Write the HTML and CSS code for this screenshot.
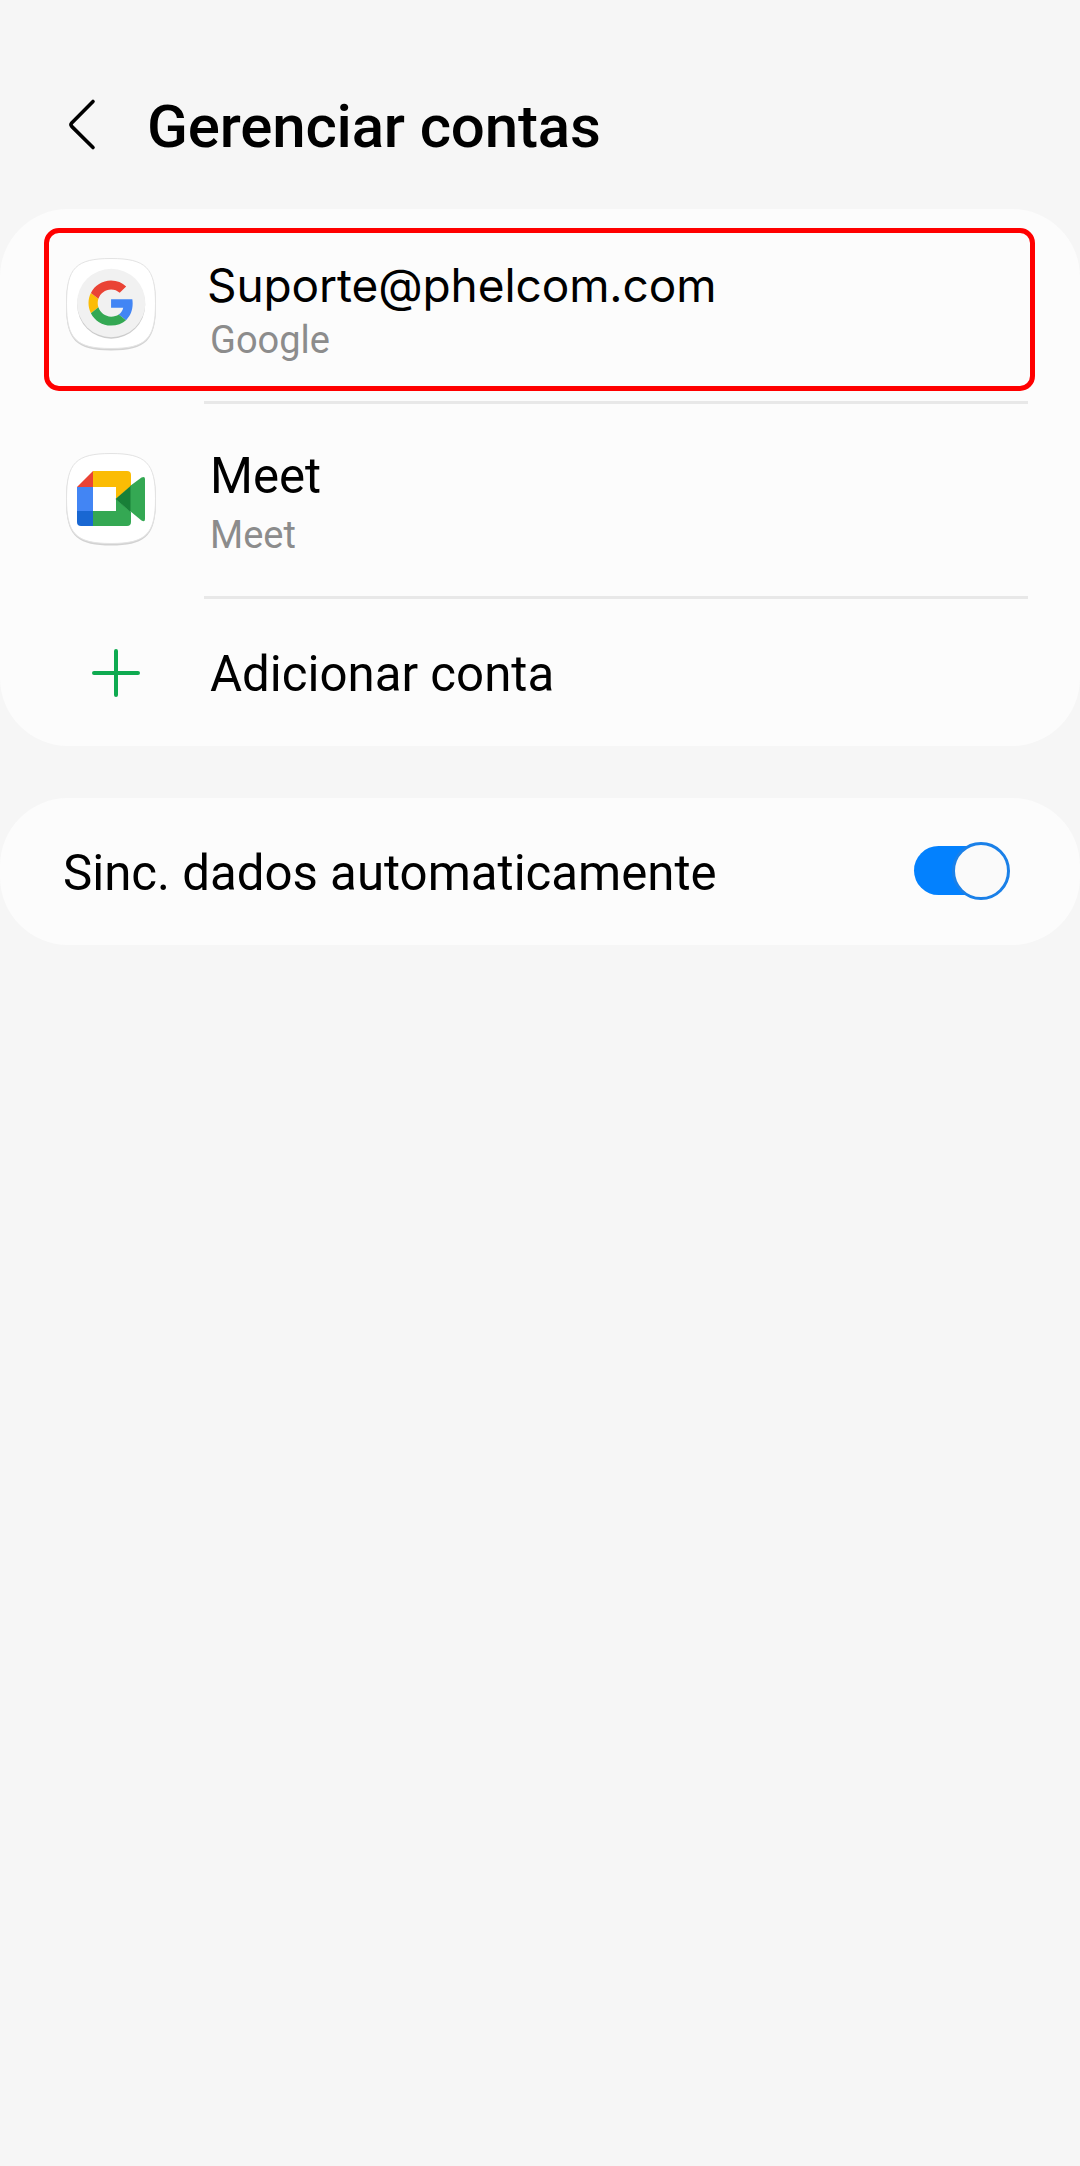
FILE: index.html
```html
<!DOCTYPE html>
<html lang="pt-BR">
<head>
<meta charset="utf-8">
<title>Gerenciar contas</title>
<link rel="stylesheet" href="styles.css">
</head>
<body>
<header class="header">
  <svg class="back" width="30" height="56" viewBox="0 0 30 56" fill="none" stroke="#000" stroke-width="3.6" stroke-linecap="round" stroke-linejoin="round"><path d="M26 5.500 4.700 27q-1.500 1.700 0 3.400L26 51.500"/></svg>
  <h1 class="title">Gerenciar contas</h1>
</header>
<main class="content">
  <section class="card accounts">
    <div class="row account selected">
      <svg class="app-icon" width="94" height="96" viewBox="0 0 94 96">
        <path d="M47 4C82 4 92 14 92 49S82 94.500 47 94.500 2 84 2 49 12 4 47 4Z" fill="#d2d2d2"/>
        <path d="M47 2.500C82 2.500 91.500 12 91.500 47.500S82 92.500 47 92.500 2.500 83 2.500 47.500 12 2.500 47 2.500Z" fill="#fff" stroke="#e3e3e3" stroke-width="1"/>
        <circle cx="47.200" cy="48.700" r="34" fill="#ccc"/>
        <circle cx="47.200" cy="47" r="34.200" fill="#f1f1f1"/>
        <g transform="translate(24.500 24.500) scale(.94)">
          <path fill="#4285f4" d="M46.980 24.550c0-1.570-.15-3.090-.38-4.550H24v9.020h12.940c-.58 2.960-2.260 5.480-4.780 7.180l7.730 6c4.510-4.180 7.090-10.360 7.090-17.650z"/>
          <path fill="#fbbc05" d="M10.530 28.590c-.48-1.450-.76-2.990-.76-4.590s.27-3.140.76-4.590l-7.980-6.190C.92 16.460 0 20.120 0 24s.92 7.540 2.560 10.780z"/>
          <path fill="#34a853" d="M24 48c6.480 0 11.930-2.130 15.890-5.810l-7.730-6c-2.150 1.450-4.920 2.300-8.160 2.300-6.260 0-11.570-4.220-13.470-9.910l-7.980 6.190C6.510 42.620 14.620 48 24 48z"/>
          <path fill="#ea4335" d="M24 9.500c3.540 0 6.710 1.220 9.210 3.600l6.850-6.850C35.900 2.380 30.470 0 24 0 14.620 0 6.510 5.380 2.560 13.220l7.980 6.190C12.430 13.720 17.740 9.500 24 9.500z"/>
        </g>
      </svg>
      <div class="labels email-labels">
        <div class="name email">Suporte@phelcom.com</div>
        <div class="type google">Google</div>
      </div>
    </div>
    <div class="divider"></div>
    <div class="row account">
      <svg class="app-icon" width="94" height="96" viewBox="0 0 94 96">
        <path d="M47 4C82 4 92 14 92 49S82 94.500 47 94.500 2 84 2 49 12 4 47 4Z" fill="#d2d2d2"/>
        <path d="M47 2.500C82 2.500 91.500 12 91.500 47.500S82 92.500 47 92.500 2.500 83 2.500 47.500 12 2.500 47 2.500Z" fill="#fff" stroke="#e3e3e3" stroke-width="1"/>
        <path fill="#ea4335" d="M29 20v16H13z"/>
        <path fill="#4285f4" d="M13 36h16v24H13z"/>
        <path fill="#1967d2" d="M13 60h16v15H17q-4 0-4-4z"/>
        <path fill="#fbbc04" d="M29 20h34q4 0 4 4v11L52 48V36H29z"/>
        <path fill="#34a853" d="M29 60h23V48l15 13v10q0 4-4 4H29z"/>
        <path fill="#34a853" d="M66 35 77.500 26.500Q81 25 81 28v40q0 3.500-3.500 1.500L66 60z"/>
        <path fill="#188038" d="m51.500 48 15-13v26z"/>
      </svg>
      <div class="labels">
        <div class="name">Meet</div>
        <div class="type meet-type">Meet</div>
      </div>
    </div>
    <div class="divider"></div>
    <div class="row add">
      <svg class="plus" width="52" height="52" viewBox="0 0 52 52" stroke="#0eaa50" stroke-width="4" stroke-linecap="round"><path d="M26 4v44M4 26h44"/></svg>
      <div class="name add-name">Adicionar conta</div>
    </div>
  </section>
  <section class="card sync">
    <div class="name sync-name">Sinc. dados automaticamente</div>
    <div class="switch"><div class="thumb"></div></div>
  </section>
</main>
</body>
</html>
```
FILE: styles.css
```css
* { box-sizing: border-box; }
body {
  margin: 0;
  min-height: 2166px;
  background: #f6f6f6;
  color: #000;
  font-family: Roboto, sans-serif;
}
.header {
  display: flex;
  align-items: flex-start;
  height: 209px;
  padding: 96px 0 0 67px;
}
.back { flex: none; }
.title {
  margin: -4px 0 0 50px;
  font-size: 60px;
  line-height: 70px;
  font-weight: 500;
  letter-spacing: -.16px;
  white-space: nowrap;
}
.content { display: flex; flex-direction: column; gap: 52px; }
.card { background: #fcfcfc; border-radius: 68px; }
.accounts { height: 537px; padding-top: 19px; }
.row { display: flex; }
.account { height: 192px; margin-left: 44px; padding: 47px 0 0 19.500px; }
.selected {
  width: 991px;
  height: 163px;
  margin-bottom: 10px;
  padding: 23px 0 0 14.500px;
  border: 5px solid #f00;
  border-radius: 15px;
}
.app-icon { flex: none; }
.labels { margin: -4px 0 0 52.500px; }
.email-labels { margin-top: 0; }
.name { font-size: 49.200px; line-height: 58px; white-space: nowrap; }
.email {
  margin-left: -3px;
  font-family: Inter, sans-serif;
  font-size: 46px;
  font-weight: 370;
  letter-spacing: -.1px;
}
.type { font-size: 38px; line-height: 44px; color: #8c8c8c; }
.google { margin-top: 4px; }
.meet-type { margin-top: 8px; }
.divider { height: 3px; margin: 0 52px 0 204px; background: #e8e8e8; }
.add { padding: 48px 0 0 90px; }
.add-name { margin: -2px 0 0 68px; }
.sync {
  display: flex;
  align-items: center;
  justify-content: space-between;
  height: 147px;
  padding: 0 70px 0 63px;
}
.sync-name { padding-top: 2px; }
.switch {
  display: flex;
  justify-content: flex-end;
  align-items: center;
  width: 96px;
  height: 49px;
  margin-bottom: 2px;
  border-radius: 25px;
  background: linear-gradient(90deg, #0381fe 70px, transparent 70px);
}
.thumb {
  flex: none;
  width: 58px;
  height: 58px;
  border: 3px solid #1a80e8;
  border-radius: 50%;
  background: #fafafa;
}
```
